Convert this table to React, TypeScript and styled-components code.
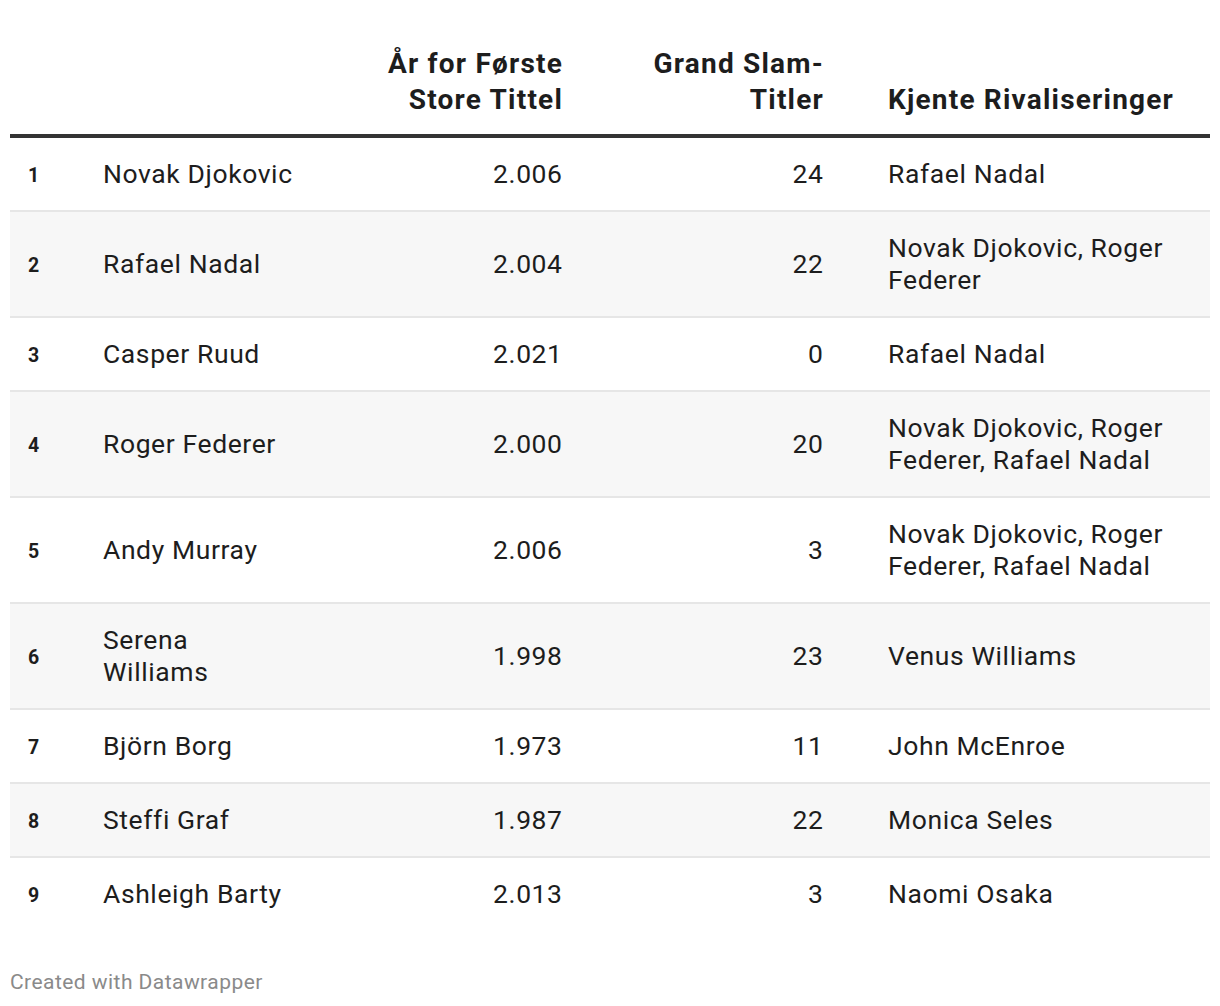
import React from "react";
import styled, { createGlobalStyle } from "styled-components";

const Global = createGlobalStyle`
  html, body { margin: 0; padding: 0; background: #ffffff; }
  body { font-family: Roboto, "Liberation Sans", Arial, sans-serif; color: #1d1d1d; }
`;

const COLS = "85px 215px 260px 261px 379px";

const Page = styled.div`
  padding: 0 10px;
  width: 1200px;
`;

const Table = styled.div`
  display: flex;
  flex-direction: column;
  margin-top: 46px;
`;

const HeadRow = styled.div`
  display: grid;
  grid-template-columns: ${COLS};
  align-items: end;
  padding-bottom: 16px;
  border-bottom: 4px solid #333333;
`;

const Row = styled.div<{ $striped: boolean; $last?: boolean }>`
  display: grid;
  grid-template-columns: ${COLS};
  align-items: center;
  padding: 20px 0;
  background: ${(p) => (p.$striped ? "#f7f7f7" : "#ffffff")};
  border-bottom: ${(p) => (p.$last ? "none" : "2px solid #e6e6e6")};
`;

type Align = "left" | "right";

const HeadCell = styled.div<{ $align: Align; $padLeft?: number }>`
  font-weight: 700;
  font-size: 28px;
  line-height: 36px;
  letter-spacing: 1.2px;
  color: #1d1d1d;
  text-align: ${(p) => p.$align};
  padding: 0 ${(p) => (p.$align === "right" ? 7 : 0)}px 0 ${(p) => p.$padLeft ?? 8}px;
  white-space: pre-line;
`;

const Cell = styled.div<{ $align: Align; $padLeft?: number }>`
  font-size: 26.5px;
  line-height: 32px;
  letter-spacing: 0.6px;
  color: #1d1d1d;
  text-align: ${(p) => p.$align};
  padding: 0 ${(p) => (p.$align === "right" ? 7.4 : 0)}px 0 ${(p) => p.$padLeft ?? 8}px;
  white-space: pre-line;
`;

const Rank = styled.div`
  font-weight: 700;
  font-size: 19.5px;
  line-height: 28px;
  letter-spacing: 0.4px;
  color: #1d1d1d;
  padding: 4px 0 0 18px;
`;

const Footer = styled.div`
  margin-top: 36px;
  font-size: 21px;
  line-height: 32px;
  letter-spacing: 0.45px;
  color: #8a8a8a;
`;

const rows = [
  { name: "Novak Djokovic", year: "2.006", titles: "24", rival: "Rafael Nadal" },
  { name: "Rafael Nadal", year: "2.004", titles: "22", rival: "Novak Djokovic, Roger Federer" },
  { name: "Casper Ruud", year: "2.021", titles: "0", rival: "Rafael Nadal" },
  { name: "Roger Federer", year: "2.000", titles: "20", rival: "Novak Djokovic, Roger Federer, Rafael Nadal" },
  { name: "Andy Murray", year: "2.006", titles: "3", rival: "Novak Djokovic, Roger Federer, Rafael Nadal" },
  { name: "Serena\nWilliams", year: "1.998", titles: "23", rival: "Venus Williams" },
  { name: "Björn Borg", year: "1.973", titles: "11", rival: "John McEnroe" },
  { name: "Steffi Graf", year: "1.987", titles: "22", rival: "Monica Seles" },
  { name: "Ashleigh Barty", year: "2.013", titles: "3", rival: "Naomi Osaka" },
];

export default function App() {
  return (
    <Page>
      <Global />
      <Table>
        <HeadRow>
          <HeadCell $align="left" />
          <HeadCell $align="left" />
          <HeadCell $align="right">{"År for Første\nStore Tittel"}</HeadCell>
          <HeadCell $align="right">{"Grand Slam-\nTitler"}</HeadCell>
          <HeadCell $align="left" $padLeft={57}>Kjente Rivaliseringer</HeadCell>
        </HeadRow>
        {rows.map((r, i) => (
          <Row key={i} $striped={i % 2 === 1} $last={i === rows.length - 1}>
            <Rank>{i + 1}</Rank>
            <Cell $align="left">{r.name}</Cell>
            <Cell $align="right">{r.year}</Cell>
            <Cell $align="right">{r.titles}</Cell>
            <Cell $align="left" $padLeft={57}>{r.rival}</Cell>
          </Row>
        ))}
      </Table>
      <Footer>Created with Datawrapper</Footer>
    </Page>
  );
}
